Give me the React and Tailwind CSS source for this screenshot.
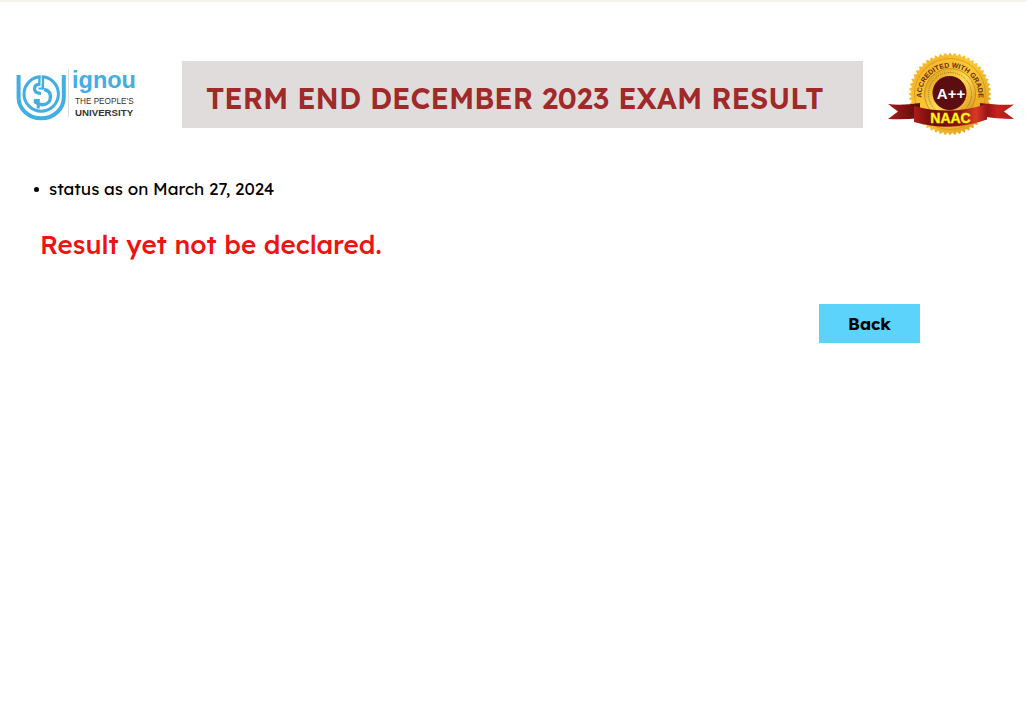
function UniversityLogo() {
  return (
    <svg viewBox="14 65 124 58" className="h-[58px] w-[124px] shrink-0" role="img" aria-label="ignou The People's University">
      <g fill="none" stroke="#42aee3">
        <path d="M18.6 75v22.500a22.600 20.800 0 0 0 45.200 0V75" strokeWidth="4" />
        <circle cx="41.200" cy="94" r="17.200" strokeWidth="3" />
        <path d="M39.500 76v7.500M42.800 76v13.500" strokeWidth="2.600" />
        <path d="M40.500 84.200c-4 0-6 1.800-6 4.600s2.200 4.500 6.500 4.700" strokeWidth="3.200" />
        <path d="M38.500 88.500h4.500" strokeWidth="2" />
        <path d="M44 89.500c4.700.800 6.500 3.400 6.500 7.200 0 4.900-3.400 8-8.500 8-3.500 0-5.500-1.500-7.500-3.200" strokeWidth="3.400" />
        <path d="M33.800 100.500h4.500v8" strokeWidth="3" />
      </g>
      <path d="M41.200 75v9" stroke="#fff" strokeWidth=".8" />
      <path d="M68.500 69v48" stroke="#dcdcdc" strokeWidth="1" />
      <g fontFamily="'Liberation Sans', Arial, sans-serif">
        <text x="72" y="88" fontSize="23.500" fontWeight="700" fill="#42aee3">ignou</text>
        <text x="75" y="103.500" fontSize="8.200" fill="#333">THE PEOPLE’S</text>
        <text x="75" y="115.500" fontSize="9.700" fontWeight="700" fill="#333">UNIVERSITY</text>
      </g>
    </svg>
  );
}

const sealEdge = Array.from({ length: 104 }, (_, i) => {
  const r = i % 2 ? 38.5 : 41.5;
  const a = (i * Math.PI) / 52;
  return `${(950 + r * Math.cos(a)).toFixed(1)},${(94 + r * Math.sin(a)).toFixed(1)}`;
}).join(" ");

function AccreditationSeal() {
  return (
    <svg viewBox="887 51 128 86" className="h-[86px] w-[128px] shrink-0" role="img" aria-label="NAAC accredited with grade A++">
      <defs>
        <linearGradient id="gold" x1="0" y1="0" x2="1" y2="1">
          <stop offset="0" stopColor="#f2ad1c" />
          <stop offset=".45" stopColor="#fbc935" />
          <stop offset="1" stopColor="#dc9516" />
        </linearGradient>
        <linearGradient id="ring" x1="0" y1="0" x2="1" y2="1">
          <stop offset="0" stopColor="#d8920f" />
          <stop offset=".5" stopColor="#ffda54" />
          <stop offset="1" stopColor="#cf860d" />
        </linearGradient>
        <linearGradient id="ribbon">
          <stop offset="0" stopColor="#ad1c19" />
          <stop offset=".25" stopColor="#710b0c" />
          <stop offset=".6" stopColor="#8a1111" />
          <stop offset=".85" stopColor="#d83a26" />
          <stop offset="1" stopColor="#9a1514" />
        </linearGradient>
        <linearGradient id="tailLeft">
          <stop offset="0" stopColor="#a51c1a" />
          <stop offset="1" stopColor="#5e0a0b" />
        </linearGradient>
        <linearGradient id="tailRight">
          <stop offset="0" stopColor="#6e0d0d" />
          <stop offset=".5" stopColor="#c5221e" />
          <stop offset="1" stopColor="#b31d1b" />
        </linearGradient>
        <path id="sealArc" d="M921.5 100V96a28.500 28.500 0 0 1 57 0V100" />
      </defs>
      <polygon points={sealEdge} fill="url(#gold)" />
      <circle cx="950" cy="94" r="35.500" fill="none" stroke="#c98615" strokeWidth=".6" />
      <circle cx="950" cy="94" r="25.500" fill="url(#ring)" stroke="#c17c12" strokeWidth=".7" />
      <circle cx="950" cy="94" r="21.500" fill="none" stroke="#9b6518" strokeWidth=".9" strokeDasharray="1 1.200" />
      <circle cx="949.500" cy="93" r="17" fill="#5c0d10" />
      <text fontFamily="'Liberation Sans', Arial, sans-serif" fontSize="7" fontWeight="700" fill="#67290d">
        <textPath href="#sealArc" startOffset="50%" textAnchor="middle">ACCREDITED WITH GRADE</textPath>
      </text>
      <text x="951" y="98.500" textAnchor="middle" fontFamily="'Liberation Sans', Arial, sans-serif" fontSize="15" fontWeight="700" fill="#fff">A++</text>
      <path d="M888 104q13 2 32-1v15q-16 2-32 1l10-7.500z" fill="url(#tailLeft)" />
      <path d="M1014 104.500q-14 1-34-1.500v13q16 3 34 3l-10-7.500z" fill="url(#tailRight)" />
      <path d="M914 106q36 10 73-2v15.500q-36 13-73 2.500z" fill="url(#ribbon)" />
      <text x="950.500" y="122.500" textAnchor="middle" fontFamily="'Liberation Sans', Arial, sans-serif" fontSize="14" fontWeight="700" fill="#fff51a" stroke="#fff51a" strokeWidth=".4">NAAC</text>
    </svg>
  );
}

export default function App() {
  return (
    <div className="min-h-screen border-t-2 border-[#f6f3e8] bg-white font-[Lexend,Inter,sans-serif] text-black">
      <header className="flex items-center justify-between pt-[49px] pr-3 pl-3.5">
        <UniversityLogo />
        <h1 className="mx-6 ml-11 flex min-h-[67px] flex-1 items-center bg-[#e0dcdb] pt-2 pl-6 text-[29px] leading-9 font-semibold text-[#a02929]">
          TERM END DECEMBER 2023 EXAM RESULT
        </h1>
        <AccreditationSeal />
      </header>
      <main>
        <ul className="mt-10 pl-8">
          <li className="flex items-center gap-2.5 text-[17px] leading-6 font-normal">
            <span className="ml-0.5 size-[5px] rounded-full bg-black" aria-hidden="true" />
            status as on March 27, 2024
          </li>
        </ul>
        <p className="mt-[26px] pl-10 text-[26px] leading-9 font-medium text-[#ee1212]">Result yet not be declared.</p>
        <div className="mt-[41px] flex justify-end pr-[107px]">
          <button type="button" className="h-[39px] w-[101px] bg-[#5cd3fa] text-[17px] font-bold">Back</button>
        </div>
      </main>
    </div>
  );
}
